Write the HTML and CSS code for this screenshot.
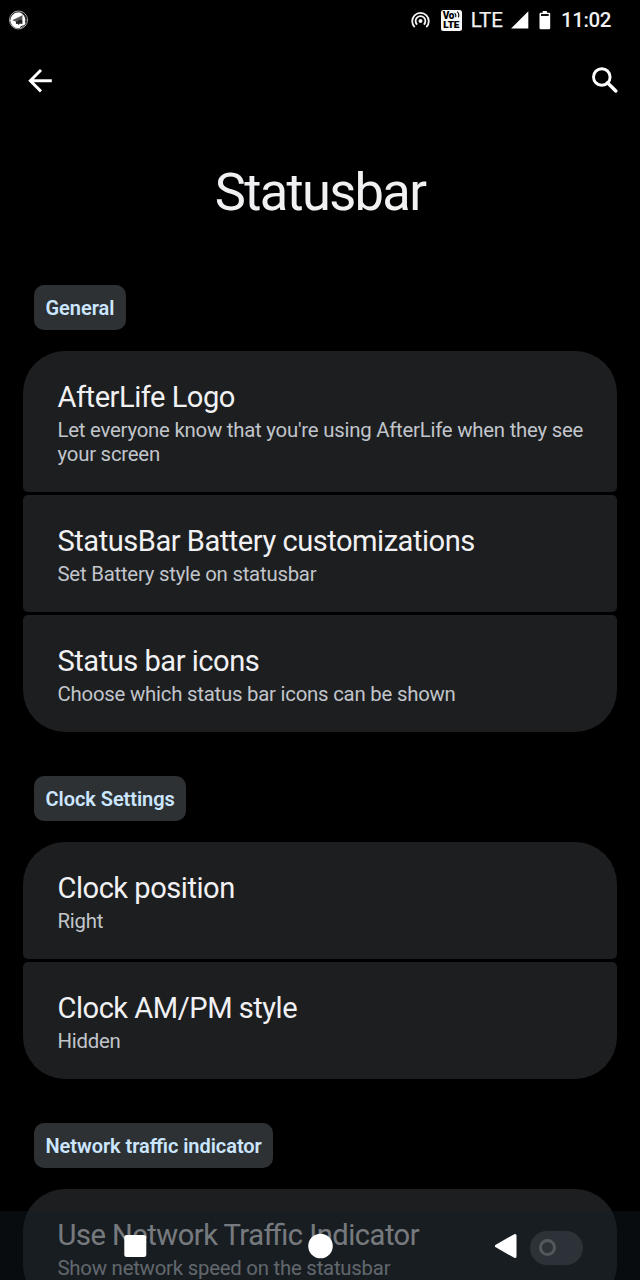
FILE: index.html
```html
<!DOCTYPE html>
<html lang="en">
<head>
<meta charset="utf-8">
<title>Statusbar</title>
<link rel="stylesheet" href="styles.css">
</head>
<body>
<div class="screen">
  <header class="status">
    <svg class="notif" width="20" height="20" viewBox="0 0 20 20">
      <circle cx="10.500" cy="10" r="9" fill="none" stroke="#bbb" stroke-width=".9"/>
      <circle cx="10.300" cy="10.300" r="8" fill="#fff"/>
      <path d="M13.500 3a8 8 0 0 1 4 9.500M15.500 15.500l-3.500 2" fill="none" stroke="#111" stroke-width="1"/>
      <path d="M4.200 10.200 14.500 5.200l-.3 8.800-2.300-.7-1.200 1.500-1.200-1.300-1.500.6-.2-2.600z" fill="#555"/>
      <path d="m8 12 4-2.500 2.300 1-.1 3.500-2.300-.7-1.200 1.500-1.200-1.300-1.500.6z" fill="#222"/>
    </svg>
    <div class="indicators">
      <svg class="hotspot" width="20" height="18" viewBox="0 0 20 18" fill="none" stroke="#f4f4f4" stroke-width="1.8">
        <circle cx="10.500" cy="10" r="2" fill="#f4f4f4" stroke="none"/>
        <path d="M4.700 16.200a8.300 8.300 0 1 1 11.600 0"/>
        <path d="M7.200 13.600a4.900 4.900 0 1 1 6.600 0"/>
      </svg>
      <div class="volte">
        <span class="vo">Vo<svg width="6" height="7" viewBox="0 0 6 7" fill="none" stroke="#000" stroke-width="1.1"><path d="M.6 2.200q1.800 1.200 1 4M3 .6q2.800 2 1.400 5.600"/></svg></span>
        <span class="lte-small">LTE</span>
      </div>
      <span class="lte">LTE</span>
      <svg class="signal" width="18" height="18" viewBox="0 0 18 18"><path d="M17.300.3V17.500H.1z" fill="#fff"/></svg>
      <svg class="battery" width="12" height="20" viewBox="0 0 12 20"><path d="M3.700 1h4.200v1.700H10q1.200 0 1.200 1.200V18q0 1.200-1.200 1.200H1.700Q.5 19.200.5 18V3.900Q.5 2.700 1.700 2.700h2z" fill="#fff"/><path d="M2 4h7.700v2H2z" fill="#111"/></svg>
      <span class="time">11:02</span>
    </div>
  </header>
  <nav class="toolbar">
    <svg width="24" height="24" viewBox="0 0 24 24" fill="none" stroke="#fff" stroke-width="2.900"><path d="M23.800 11.700H2.600M13 1 2.300 11.700 13 22.400"/></svg>
    <svg width="27" height="27" viewBox="0 0 27 27" fill="none" stroke="#fff"><circle cx="10.800" cy="10" r="8.300" stroke-width="2.900"/><path d="m16.500 15.700 8.300 8.300" stroke-width="3.400" stroke-linecap="round"/></svg>
  </nav>
  <h1 class="title">Statusbar</h1>
  <main class="content">
    <section class="group">
      <h2 class="chip">General</h2>
      <div class="cards">
        <article class="card"><h3 class="name">AfterLife Logo</h3><p class="summary">Let everyone know that you're using AfterLife when they see your screen</p></article>
        <article class="card"><h3 class="name">StatusBar Battery customizations</h3><p class="summary">Set Battery style on statusbar</p></article>
        <article class="card"><h3 class="name">Status bar icons</h3><p class="summary">Choose which status bar icons can be shown</p></article>
      </div>
    </section>
    <section class="group">
      <h2 class="chip">Clock Settings</h2>
      <div class="cards">
        <article class="card"><h3 class="name">Clock position</h3><p class="summary">Right</p></article>
        <article class="card"><h3 class="name">Clock AM/PM style</h3><p class="summary">Hidden</p></article>
      </div>
    </section>
    <section class="group">
      <h2 class="chip">Network traffic indicator</h2>
      <div class="cards">
        <article class="card switch-card">
          <div class="dim"><h3 class="name">Use Network Traffic Indicator</h3><p class="summary">Show network speed on the statusbar</p></div>
          <div class="switch"><span class="thumb"></span></div>
        </article>
      </div>
    </section>
  </main>
  <footer class="navbar">
    <svg width="24" height="24" viewBox="0 0 24 24"><rect x="1.300" y="1" width="22" height="22" rx="2.500" fill="#fff"/></svg>
    <svg width="26" height="26" viewBox="0 0 26 26"><circle cx="12.500" cy="13" r="12.300" fill="#fff"/></svg>
    <svg width="24" height="26" viewBox="0 0 24 26"><path d="M2.500 13 21 2.500V23.500z" fill="#fff" stroke="#fff" stroke-width="3" stroke-linejoin="round"/></svg>
  </footer>
</div>
</body>
</html>
```
FILE: styles.css
```css
* { box-sizing: border-box; }
body, h1, h2, h3, p { margin: 0; }
body { background: #000; font-family: Roboto, "Liberation Sans", sans-serif; color: #f1f1f3; }
.screen { position: relative; width: 640px; height: 1280px; overflow: hidden; background: #000; }
.status { display: flex; justify-content: space-between; align-items: center; height: 40px; padding: 0 29px 0 8px; }
.indicators { display: flex; align-items: center; height: 40px; }
.hotspot { margin-right: 11px; }
.volte { display: flex; flex-direction: column; align-items: center; width: 21px; height: 21px; margin-right: 9px; padding-top: 1px; border-radius: 2.5px; background: #f8f8f8; color: #000; font-weight: 900; }
.vo { display: flex; height: 9px; font-size: 10px; line-height: 10px; letter-spacing: -.4px; }
.lte-small { height: 10px; font-size: 9.8px; line-height: 10px; -webkit-text-stroke: .2px #000; }
.lte { font-size: 20.5px; line-height: 40px; margin-right: 8px; -webkit-text-stroke: .25px #f1f1f3; }
.signal { margin-right: 10px; }
.battery { margin-right: 10px; }
.time { font-size: 20.5px; line-height: 42px; font-weight: 500; letter-spacing: -.4px; }
.toolbar { display: flex; justify-content: space-between; align-items: center; height: 80px; padding: 1px 22px 0 28px; }
.title { height: 165px; padding-top: 40px; text-align: center; font-size: 52.4px; font-weight: 400; line-height: 64px; letter-spacing: -1.65px; }
.content { display: flex; flex-direction: column; gap: 43.8px; padding: 0 23px; }
.chip { width: max-content; height: 45px; margin: 0 0 21px 11px; padding: 0 11.5px; border-radius: 10px; background: #2e3134; color: #cbe6ff; font-size: 20px; font-weight: 600; line-height: 46px; letter-spacing: -.05px; font-feature-settings: "liga" 1; }
.cards { display: flex; flex-direction: column; gap: 3px; }
.card { padding: 29px 30px 26px 34.5px; border-radius: 5px; background: #1d1e20; }
.card:first-child { border-radius: 42px 42px 5px 5px; }
.card:last-child { border-radius: 5px 5px 42px 42px; }
.name { font-size: 29.1px; font-weight: 400; line-height: 34px; letter-spacing: -.49px; font-feature-settings: "liga" 1; }
.summary { margin-top: 4px; color: #c1c5cb; font-size: 20.36px; line-height: 24px; letter-spacing: -.23px; }
.card.switch-card { display: flex; justify-content: space-between; align-items: center; border-radius: 42px; padding-right: 34px; }
.dim { opacity: .76; }
.switch { display: flex; align-items: center; width: 53px; height: 34px; margin-top: -2px; padding-left: 9px; border-radius: 17px; background: #414347; }
.thumb { width: 17px; height: 17px; border: 3.5px solid #818387; border-radius: 50%; }
.navbar { position: absolute; left: 0; right: 0; bottom: 0; display: flex; justify-content: space-between; align-items: center; height: 69px; padding: 0 122px 0 123px; background: rgba(20, 28, 36, .42); }
```
